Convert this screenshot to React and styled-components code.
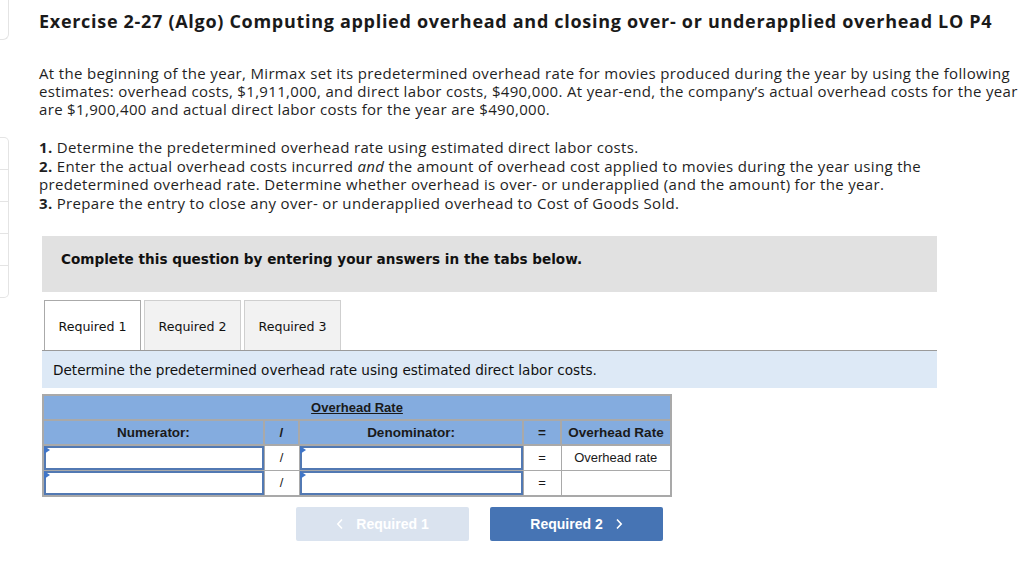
import React from "react"
import styled, { createGlobalStyle } from "styled-components"

const GlobalStyle = createGlobalStyle`
  html, body {
    margin: 0;
    padding: 0;
    background: #fff;
    overflow: hidden;
  }
  body {
    font-family: "Open Sans", Lato, sans-serif;
    color: #1f1f1f;
  }
`

const paragraphLines = [
  "At the beginning of the year, Mirmax set its predetermined overhead rate for movies produced during the year by using the following",
  "estimates: overhead costs, $1,911,000, and direct labor costs, $490,000. At year-end, the company’s actual overhead costs for the year",
  "are $1,900,400 and actual direct labor costs for the year are $490,000.",
]

const rows = [{ rate: "Overhead rate" }, { rate: "" }]

export default function App() {
  return (
    <Page>
      <GlobalStyle />
      <SideRail>
        <RailTop />
        <RailStack>
          <RailCell />
          <RailCell />
          <RailCell />
          <RailCell />
          <RailCell $last />
        </RailStack>
      </SideRail>

      <Main>
        <Title>
          Exercise 2-27 (Algo) Computing applied overhead and closing over- or underapplied overhead LO P4
        </Title>

        <Paragraph>
          {paragraphLines.map((line, i) => (
            <Line key={i}>{line}</Line>
          ))}
        </Paragraph>

        <Steps>
          <Line>
            <b>1.</b> Determine the predetermined overhead rate using estimated direct labor costs.
          </Line>
          <Line>
            <b>2.</b> Enter the actual overhead costs incurred <i>and</i> the amount of overhead cost applied to movies during the year using the
          </Line>
          <Line>
            predetermined overhead rate. Determine whether overhead is over- or underapplied (and the amount) for the year.
          </Line>
          <Line>
            <b>3.</b> Prepare the entry to close any over- or underapplied overhead to Cost of Goods Sold.
          </Line>
        </Steps>

        <Notice>Complete this question by entering your answers in the tabs below.</Notice>

        <TabBar>
          <Tab $active>Required 1</Tab>
          <Tab>Required 2</Tab>
          <Tab>Required 3</Tab>
        </TabBar>

        <InfoBar>Determine the predetermined overhead rate using estimated direct labor costs.</InfoBar>

        <RateTable>
          <thead>
            <tr>
              <TitleCell colSpan={5}>
                <u>Overhead Rate</u>
              </TitleCell>
            </tr>
            <tr>
              <HeadCell $w={221}>Numerator:</HeadCell>
              <HeadCell $w={35}>/</HeadCell>
              <HeadCell $w={224}>Denominator:</HeadCell>
              <HeadCell $w={38}>=</HeadCell>
              <HeadCell $w={110}>Overhead Rate</HeadCell>
            </tr>
          </thead>
          <tbody>
            {rows.map((row, i) => (
              <tr key={i}>
                <InputCell>
                  <Field />
                </InputCell>
                <OpCell>/</OpCell>
                <InputCell>
                  <Field />
                </InputCell>
                <OpCell>=</OpCell>
                <OpCell>{row.rate}</OpCell>
              </tr>
            ))}
          </tbody>
        </RateTable>

        <NavRow>
          <NavButton $disabled>
            <Chevron viewBox="0 0 8 12" aria-hidden="true">
              <path d="M6 1.5 1.8 6 6 10.5" />
            </Chevron>
            Required 1
          </NavButton>
          <NavButton>
            Required 2
            <Chevron viewBox="0 0 8 12" aria-hidden="true">
              <path d="M2 1.5 6.2 6 2 10.5" />
            </Chevron>
          </NavButton>
        </NavRow>
      </Main>
    </Page>
  )
}

const Page = styled.div`
  display: flex;
  width: 1024px;
  height: 567px;
  overflow: hidden;
`

const SideRail = styled.div`
  width: 9px;
  flex-shrink: 0;
  display: flex;
  flex-direction: column;
  gap: 97px;
`

const RailTop = styled.div`
  height: 39px;
  border: 1px solid #e4e4e4;
  border-left: none;
  border-top: none;
  border-bottom-right-radius: 6px;
`

const RailStack = styled.div`
  display: flex;
  flex-direction: column;
  border: 1px solid #e4e4e4;
  border-left: none;
  border-radius: 0 5px 5px 0;
`

const RailCell = styled.div`
  height: 31px;
  border-bottom: ${({ $last }) => ($last ? "none" : "1px solid #e4e4e4")};
`

const Main = styled.div`
  padding: 10px 0 0 30px;
  flex: 1;
  min-width: 0;
`

const Title = styled.h1`
  margin: 0;
  font-size: 18px;
  font-weight: 700;
  line-height: 22px;
  white-space: nowrap;
  color: #1a1a1a;
  letter-spacing: 0.7px;
`

const Paragraph = styled.div`
  margin-top: 32px;
  font-size: 15px;
  line-height: 18px;
  letter-spacing: 0.33px;
`

const Line = styled.div`
  white-space: nowrap;
`

const Steps = styled.div`
  margin-top: 20px;
  font-size: 15px;
  line-height: 18.7px;
  letter-spacing: 0.33px;

  b {
    font-weight: 700;
  }
`

const Notice = styled.div`
  margin: 23px 0 0 3px;
  width: 895px;
  height: 56px;
  box-sizing: border-box;
  background: #e1e1e1;
  padding: 14px 0 0 19px;
  font-family: "DejaVu Sans", Verdana, sans-serif;
  font-size: 13.6px;
  font-weight: 700;
  line-height: 18px;
  color: #111;
`

const TabBar = styled.div`
  display: flex;
  gap: 3px;
  margin: 8px 0 0 3px;
  width: 895px;
  padding-left: 2px;
  box-sizing: border-box;
  border-bottom: 1px solid #9a9a9a;
`

const Tab = styled.div`
  width: 97px;
  height: 50px;
  box-sizing: border-box;
  display: flex;
  align-items: center;
  justify-content: center;
  padding-top: 2px;
  border: 1px solid ${({ $active }) => ($active ? "#aaa" : "#cfcfcf")};
  border-bottom: none;
  background: ${({ $active }) => ($active ? "#fff" : "#f2f2f2")};
  margin-bottom: ${({ $active }) => ($active ? "-1px" : "0")};
  font-family: "DejaVu Sans", Verdana, sans-serif;
  font-size: 12.6px;
  color: #111;
`

const InfoBar = styled.div`
  margin-left: 3px;
  width: 895px;
  height: 37px;
  box-sizing: border-box;
  background: #dde9f6;
  padding: 10px 0 0 11px;
  font-family: "DejaVu Sans", Verdana, sans-serif;
  font-size: 13.6px;
  line-height: 18px;
  color: #111;
`

const RateTable = styled.table`
  margin: 6px 0 0 3px;
  border-collapse: collapse;
  font-family: "Liberation Sans", Arial, sans-serif;
  font-size: 13px;
  color: #1a1a1a;
  border: 2px solid #a9a9a9;

  td,
  th {
    padding: 0;
    height: 25px;
    box-sizing: border-box;
  }
`

const TitleCell = styled.th`
  background: #84acdf;
  font-weight: 700;
  text-align: center;
  border-bottom: 2px solid #a9a9a9;
`

const HeadCell = styled.th`
  width: ${({ $w }) => $w}px;
  background: #84acdf;
  font-weight: 700;
  font-size: 13.5px;
  text-align: center;
  border-right: 2px solid #a9a9a9;
  border-bottom: 2px solid #a9a9a9;

  &:last-child {
    border-right: none;
  }
`

const InputCell = styled.td`
  position: relative;
  border-right: 1px solid #a9a9a9;
  border-bottom: 1px solid #a9a9a9;
`

const Field = styled.div`
  position: relative;
  height: 24px;
  box-sizing: border-box;
  border: 2px solid #5279b3;
  background: #fff;

  &::before {
    content: "";
    position: absolute;
    left: -2px;
    top: -2px;
    border-left: 6px solid #3f75c8;
    border-top: 4px solid transparent;
    border-bottom: 4px solid transparent;
  }
`

const OpCell = styled.td`
  text-align: center;
  border-right: 1px solid #a9a9a9;
  border-bottom: 1px solid #a9a9a9;

  &:last-child {
    border-right: none;
  }
`

const NavRow = styled.div`
  display: flex;
  gap: 21px;
  margin: 10px 0 0 257px;
`

const NavButton = styled.div`
  width: 173px;
  height: 34px;
  border-radius: 2px;
  display: flex;
  align-items: center;
  justify-content: center;
  gap: 12px;
  background: ${({ $disabled }) => ($disabled ? "#dae3ef" : "#4674b4")};
  color: #fff;
  font-family: "Liberation Sans", Arial, sans-serif;
  font-size: 14px;
  font-weight: 700;
`

const Chevron = styled.svg`
  width: 8px;
  height: 12px;
  fill: none;
  stroke: #fff;
  stroke-width: 1.6;
`
